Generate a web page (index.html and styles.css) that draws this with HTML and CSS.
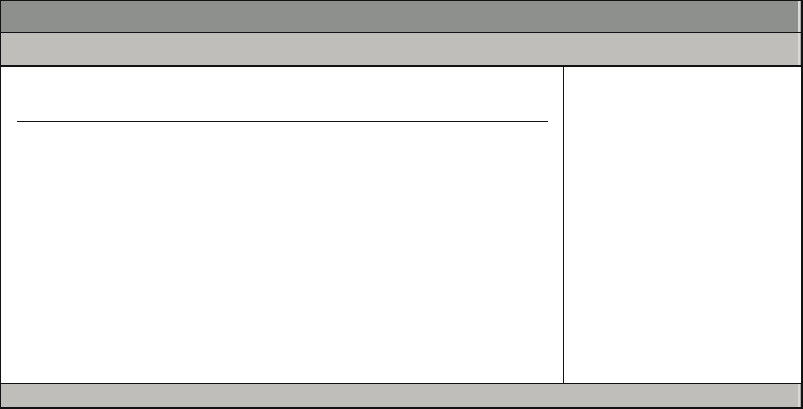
FILE: index.html
```html
<!DOCTYPE html>
<html>
<head>
    <title>Setup Utility</title>
    <link rel="stylesheet" href="styles.css">
</head>
<body>
    <div class="screen">
        <!-- Title bar -->
        <div class="bar title-bar"></div>

        <!-- Menu bar -->
        <div class="bar menu-bar"></div>

        <!-- Main area: settings list + help column -->
        <div class="main">
            <div class="settings">
                <div class="rule"></div>
            </div>
            <div class="help"></div>
        </div>

        <!-- Key legend -->
        <div class="bar status-bar"></div>
    </div>
</body>
</html>
```

FILE: styles.css
```css
body {
    margin: 0;
    font-family: "Liberation Sans", Arial, sans-serif;
    background: #ffffff;
}
.screen {
    width: 803px;
    height: 409px;
    box-sizing: border-box;
    border-style: solid;
    border-color: #121212;
    border-width: 1px 2px 2px 1px;
    display: flex;
    flex-direction: column;
}
.bar {
    box-shadow: inset -1px 0 0 #a9a9a7, inset -3px 0 0 #d9d9d7;
}
.title-bar {
    height: 31px;
    background: #8e908d;
    border-bottom: 1px solid #121212;
}
.menu-bar {
    height: 32px;
    background: #bfbebb;
    border-bottom: 2px solid #121212;
}
.main {
    height: 316px;
    display: grid;
    grid-template-columns: 562px 237px;
    background: #ffffff;
}
.settings {
    padding: 54px 15px 0 16px;
}
.rule {
    height: 1px;
    background: #121212;
}
.help {
    border-left: 1px solid #121212;
}
.status-bar {
    height: 23px;
    background: #bfbebb;
    border-top: 1px solid #121212;
}
```
